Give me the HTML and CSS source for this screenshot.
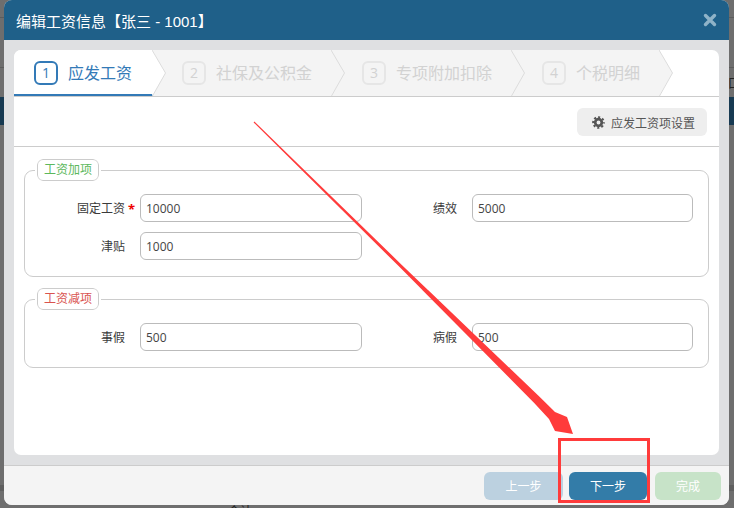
FILE: index.html
```html
<!DOCTYPE html>
<html lang="zh-CN">
<head>
<meta charset="utf-8">
<title>编辑工资信息</title>
<link rel="stylesheet" href="styles.css">
</head>
<body>
<div class="backdrop-bits"><span class="bit-right">口</span><span class="bit-bottom">合计</span></div>
<div class="modal">
  <header class="modal-head">
    <h1 class="modal-title">编辑工资信息【张三 - 1001】</h1>
    <svg class="close" viewBox="0 0 14 14" width="14" height="14"><path d="M2.5 2.5L11.500 11.500M11.500 2.500L2.500 11.500" stroke="#8fb3c8" stroke-width="3.400" stroke-linecap="round"/></svg>
  </header>
  <div class="modal-body">
    <div class="card">
      <nav class="steps">
        <div class="step step-on step-w1">
          <span class="num">1</span><span class="step-name">应发工资</span>
          <svg class="chev" viewBox="0 0 15 46" width="15" height="46"><path d="M0 0L13.500 23L0 46z" fill="#fff"/><path d="M0 0L13.500 23L0.500 46" fill="none" stroke="#dcdcdc"/></svg>
        </div>
        <div class="step step-w2a">
          <span class="num">2</span><span class="step-name">社保及公积金</span>
          <svg class="chev" viewBox="0 0 15 46" width="15" height="46"><path d="M0 0L13.500 23L0 46z" fill="#f4f4f4"/><path d="M0 0L13.500 23L0.500 46" fill="none" stroke="#dcdcdc"/></svg>
        </div>
        <div class="step step-w2">
          <span class="num">3</span><span class="step-name">专项附加扣除</span>
          <svg class="chev" viewBox="0 0 15 46" width="15" height="46"><path d="M0 0L13.500 23L0 46z" fill="#f4f4f4"/><path d="M0 0L13.500 23L0.500 46" fill="none" stroke="#dcdcdc"/></svg>
        </div>
        <div class="step step-w3">
          <span class="num">4</span><span class="step-name">个税明细</span>
          <svg class="chev" viewBox="0 0 15 46" width="15" height="46"><path d="M0 0L13.500 23L0 46z" fill="#f4f4f4"/><path d="M0 0L13.500 23L0.500 46" fill="none" stroke="#dcdcdc"/></svg>
        </div>
      </nav>
      <div class="toolbar">
        <button class="setting" type="button">
          <svg class="gear" viewBox="0 0 13 13" width="13" height="13"><circle cx="6.500" cy="6.500" r="3.300" fill="none" stroke="#555" stroke-width="2.700"/><circle cx="6.500" cy="6.500" r="5.400" fill="none" stroke="#555" stroke-width="1.900" stroke-dasharray="2.120 2.120" stroke-dashoffset="1.060"/></svg>
          应发工资项设置
        </button>
      </div>
      <fieldset class="group group-first">
        <legend class="legend legend-plus">工资加项</legend>
        <div class="grid">
          <label class="lab">固定工资<i class="req">*</i></label><input class="inp" value="10000">
          <label class="lab">绩效</label><input class="inp" value="5000">
          <label class="lab">津贴</label><input class="inp" value="1000">
        </div>
      </fieldset>
      <fieldset class="group">
        <legend class="legend legend-minus">工资减项</legend>
        <div class="grid">
          <label class="lab">事假</label><input class="inp" value="500">
          <label class="lab">病假</label><input class="inp" value="500">
        </div>
      </fieldset>
    </div>
  </div>
  <footer class="modal-foot">
    <button class="btn btn-prev" type="button">上一步</button>
    <button class="btn btn-next" type="button">下一步</button>
    <button class="btn btn-done" type="button">完成</button>
  </footer>
</div>
<svg class="marks" viewBox="0 0 734 508" width="734" height="508">
  <polygon points="253.600,122.400 254.400,121.600 400.800,263.900 478.100,337.900 539.800,397.100 555,412 567,417 573,434 555,431 549,419 534.200,402.900 473.900,342.100 398.600,266.100" fill="#ff3b3b"/>
  <rect x="559.500" y="439.500" width="89" height="62" fill="none" stroke="#ff3b3b" stroke-width="3"/>
</svg>
</body>
</html>
```
FILE: styles.css
```css
* { box-sizing: border-box; }
html, body { margin: 0; height: 100%; }
body {
  position: relative;
  width: 734px;
  height: 508px;
  overflow: hidden;
  font-family: "Open Sans", "Noto Sans CJK SC", sans-serif;
  font-size: 12px;
  color: #333;
  background:
    linear-gradient(#173a52, #173a52) 0 97px / 100% 28px no-repeat,
    linear-gradient(#5c5c5c, #5c5c5c) 0 17px / 100% 1px no-repeat,
    linear-gradient(#5c5c5c, #5c5c5c) 0 67px / 100% 1px no-repeat,
    linear-gradient(#5f5f5f, #5f5f5f) 0 485px / 100% 6px no-repeat,
    #6e6e6e;
}
.backdrop-bits { position: absolute; inset: 0; }
.bit-right { position: absolute; left: 728px; top: 74px; font-size: 12px; color: #222; }
.bit-bottom { position: absolute; left: 228px; top: 502px; font-size: 12px; color: #222; }

.modal {
  position: relative;
  margin-left: 4px;
  width: 725px;
  height: 505px;
  display: flex;
  flex-direction: column;
  border-radius: 8px;
  overflow: hidden;
  background: #dfe0e2;
}
.modal-head {
  flex: 0 0 40px;
  display: flex;
  align-items: center;
  justify-content: space-between;
  padding: 0 12px;
  background: #1f6089;
}
.modal-title {
  margin: 0;
  font-family: "Liberation Sans", "Noto Sans CJK SC", sans-serif;
  font-size: 15px;
  font-weight: 400;
  color: #fff;
}
.close { display: block; }
.modal-body { flex: 1; min-height: 0; padding: 10px; }
.card { height: 100%; background: #fff; border-radius: 7px; overflow: hidden; }

.steps { display: flex; height: 47px; border-bottom: 1px solid #ccc; }
.step {
  position: relative;
  display: flex;
  align-items: center;
  gap: 10px;
  height: 46px;
  padding-left: 30px;
  background: #f4f4f4;
  color: #d2d2d2;
  font-size: 16px;
}
.step-on {
  padding-left: 20px;
  background: #fff;
  color: #337ab7;
  box-shadow: inset 0 -2px 0 #337ab7;
  z-index: 4;
}
.step-w1 { width: 139px; }
.step-w2a { width: 179px; padding-left: 29px; z-index: 3; }
.step-w2 { width: 180px; z-index: 2; }
.step-w3 { width: 148px; z-index: 1; }
.num {
  flex: none;
  display: flex;
  align-items: center;
  justify-content: center;
  width: 24px;
  height: 24px;
  border: 2px solid #e6e6e6;
  border-radius: 6px;
  font-size: 14px;
  line-height: 1;
}
.step-on .num { border-color: #337ab7; }
.step-name { line-height: 24px; white-space: nowrap; }
.chev { position: absolute; top: 0; left: calc(100% - 1px); display: block; }

.toolbar {
  display: flex;
  justify-content: flex-end;
  height: 50px;
  padding: 11px 12px 0 0;
  border-bottom: 1px solid #ccc;
}
.setting {
  display: flex;
  align-items: center;
  gap: 6px;
  height: 28px;
  padding: 1px 12px 0 15px;
  border: 0;
  border-radius: 6px;
  background: #eee;
  color: #555;
  font: inherit;
}
.gear { display: block; }

.group {
  margin: 11px 10px 0;
  padding: 0;
  min-width: 0;
  border: 1px solid #ccc;
  border-radius: 9px;
}
.group-first { margin-top: 12px; }
.legend {
  margin: 0 0 0 12px;
  padding: 0 6px;
  height: 22px;
  line-height: 20px;
  border: 1px solid #ccc;
  border-radius: 6px;
  outline: 2px solid #fff;
  background: #fff;
}
.legend-plus { color: #5cb85c; }
.legend-minus { color: #d9534f; }
.grid {
  display: grid;
  grid-template-columns: 115px 222px 110px 221px;
  row-gap: 10px;
  padding: 13px 0 16px;
  align-items: center;
}
.lab { position: relative; padding-right: 15px; text-align: right; color: #3a3a3a; }
.req { position: absolute; right: 5px; top: 1px; color: #e00; font-style: normal; font-size: 13px; font-weight: 700; }
.inp {
  display: block;
  width: 100%;
  height: 28px;
  padding: 0 5px;
  border: 1px solid #bbb;
  border-radius: 6px;
  background: #fff;
  color: #444;
  font: inherit;
}

.modal-foot {
  flex: 0 0 40px;
  display: flex;
  align-items: flex-start;
  justify-content: flex-end;
  padding: 6px 8px 0 0;
  background: #f4f4f4;
  border-top: 1px solid #ccc;
}
.btn {
  height: 28px;
  border: 0;
  border-radius: 6px;
  color: #fff;
  font: inherit;
}
.btn-prev { width: 79px; margin-right: 6px; background: #bcd1e0; }
.btn-next { width: 78px; margin-right: 8px; background: #337ca8; }
.btn-done { width: 66px; background: #c7e3c8; }

.marks { position: absolute; left: 0; top: 0; display: block; pointer-events: none; }
```
